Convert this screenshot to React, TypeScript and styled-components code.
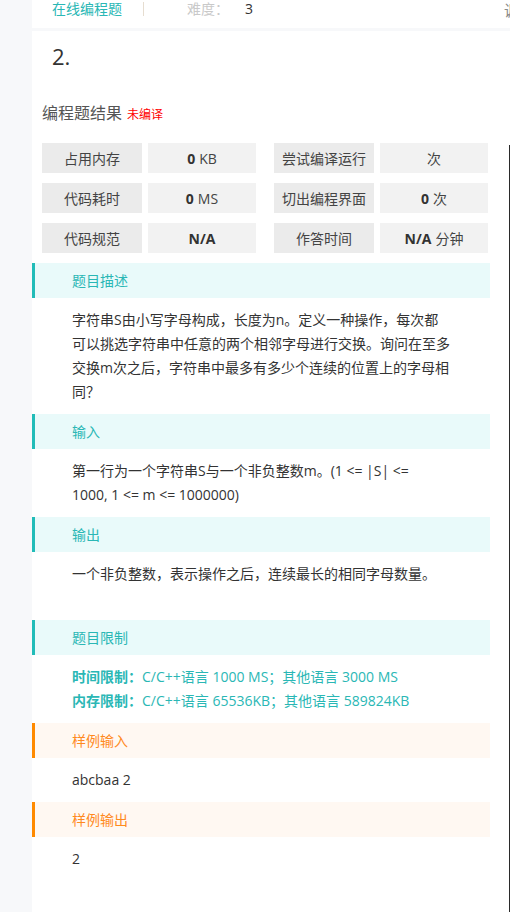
import React from "react";
import styled, { createGlobalStyle } from "styled-components";

const GlobalStyle = createGlobalStyle`
  html, body {
    margin: 0;
    padding: 0;
    background: #f7f8fa;
    overflow: hidden;
  }
  body {
    font-family: "Open Sans", "Noto Sans CJK SC", sans-serif;
    color: #333;
  }
  * { box-sizing: border-box; }
`;

const TEAL = "#2ab7b5";
const TEAL_BORDER = "#21bcb8";
const ORANGE = "#ff8a1e";
const ORANGE_BORDER = "#ff8a00";

const Page = styled.div`
  display: grid;
  grid-template-columns: 32px 1fr;
  min-height: 100vh;
  width: 510px;
  overflow: hidden;
`;

const Sidebar = styled.div`
  background: #f7f8fa;
`;

const Workspace = styled.div`
  display: flex;
  flex-direction: column;
  min-width: 0;
`;

const TopBar = styled.header`
  height: 28px;
  background: #fff;
  display: flex;
  margin-bottom: 3px;
`;

const TopMain = styled.div`
  width: 471px;
  flex: none;
  display: flex;
  align-items: flex-start;
  padding-left: 20px;
  font-size: 14px;
  line-height: 17px;
`;

const TopLink = styled.span`
  color: ${TEAL};
`;

const TopSep = styled.span`
  width: 1px;
  height: 14px;
  margin: 2px 0 0 21px;
  background: #e6ddd0;
`;

const TopLabel = styled.span`
  color: #c9c9c9;
  margin-left: 43px;
`;

const TopValue = styled.span`
  color: #333;
  margin-left: 16px;
`;

const TopSide = styled.div`
  flex: 1;
  overflow: hidden;
  white-space: nowrap;
  font-size: 15px;
  line-height: 20px;
  color: #8a8a8a;
  padding-left: 1px;
`;

const Body = styled.div`
  flex: 1;
  background: #fff;
  display: flex;
`;

const Main = styled.main`
  width: 471px;
  flex: none;
  padding-bottom: 32px;
`;

const Title = styled.h1`
  margin: 10px 0 0 20px;
  font-size: 22px;
  font-weight: 400;
  line-height: 30px;
  color: #333;
`;

const ResultHeading = styled.h2`
  margin: 30px 0 0 10px;
  font-size: 16px;
  font-weight: 400;
  line-height: 24px;
  color: #555;
  display: flex;
  align-items: baseline;
  gap: 5px;
`;

const Status = styled.span`
  font-size: 12px;
  color: #ff0000;
`;

const StatsGrid = styled.div`
  margin: 16px 0 0 10px;
  display: grid;
  grid-template-columns: 214px 214px;
  column-gap: 18px;
  row-gap: 10px;
`;

const StatPair = styled.div`
  display: grid;
  grid-template-columns: 100px 108px;
  column-gap: 6px;
`;

const StatCell = styled.div<{ $label?: boolean }>`
  height: 30px;
  display: flex;
  align-items: center;
  justify-content: center;
  font-size: 14px;
  color: #444;
  background: ${(p) => (p.$label ? "#ebebeb" : "#f2f2f2")};
  gap: 4px;
`;

const Strong = styled.b`
  font-weight: 700;
  color: #333;
`;

const Sections = styled.div`
  margin-top: 10px;
  margin-right: 13px;
`;

const SectionHeader = styled.div<{ $tone: "teal" | "orange" }>`
  height: 35px;
  line-height: 35px;
  padding-left: 37px;
  font-size: 14px;
  border-left: 3px solid ${(p) => (p.$tone === "teal" ? TEAL_BORDER : ORANGE_BORDER)};
  background: ${(p) => (p.$tone === "teal" ? "#e9fafa" : "#fff8f2")};
  color: ${(p) => (p.$tone === "teal" ? TEAL : ORANGE)};
`;

const SectionBody = styled.div<{ $extra?: boolean }>`
  padding: 10px 0 ${(p) => (p.$extra ? "34px" : "10px")} 40px;
`;

const Paragraph = styled.p<{ $accent?: boolean }>`
  margin: 0;
  width: 379px;
  font-size: 14px;
  line-height: 24px;
  color: ${(p) => (p.$accent ? TEAL : "#333")};
`;

const LimitLabel = styled.b`
  font-weight: 700;
`;

const Side = styled.aside`
  flex: 1;
  min-width: 0;
  display: flex;
  flex-direction: column;
  padding-left: 6px;
`;

const SideMark = styled.span`
  margin-top: 72px;
  font-size: 12px;
  line-height: 16px;
  color: #b07a3a;
  padding-left: 1px;
`;

const Editor = styled.div`
  margin-top: 26px;
  flex: 1;
  border-left: 1px solid #2a2a2a;
  background: #fff;
`;

const stats: [string, React.ReactNode, string, React.ReactNode][] = [
  ["占用内存", <><Strong>0</Strong> KB</>, "尝试编译运行", <>次</>],
  ["代码耗时", <><Strong>0</Strong> MS</>, "切出编程界面", <><Strong>0</Strong> 次</>],
  ["代码规范", <Strong>N/A</Strong>, "作答时间", <><Strong>N/A</Strong> 分钟</>],
];

export default function App() {
  return (
    <>
      <GlobalStyle />
      <Page>
        <Sidebar />
        <Workspace>
          <TopBar>
            <TopMain>
              <TopLink>在线编程题</TopLink>
              <TopSep />
              <TopLabel>难度：</TopLabel>
              <TopValue>3</TopValue>
            </TopMain>
            <TopSide>调试</TopSide>
          </TopBar>
          <Body>
            <Main>
              <Title>2.</Title>
              <ResultHeading>
                编程题结果<Status>未编译</Status>
              </ResultHeading>
              <StatsGrid>
                {stats.map(([l1, v1, l2, v2], i) => (
                  <React.Fragment key={i}>
                    <StatPair>
                      <StatCell $label>{l1}</StatCell>
                      <StatCell>{v1}</StatCell>
                    </StatPair>
                    <StatPair>
                      <StatCell $label>{l2}</StatCell>
                      <StatCell>{v2}</StatCell>
                    </StatPair>
                  </React.Fragment>
                ))}
              </StatsGrid>
              <Sections>
                <SectionHeader $tone="teal">题目描述</SectionHeader>
                <SectionBody>
                  <Paragraph>
                    字符串S由小写字母构成，长度为n。定义一种操作，每次都可以挑选字符串中任意的两个相邻字母进行交换。询问在至多交换m次之后，字符串中最多有多少个连续的位置上的字母相同？
                  </Paragraph>
                </SectionBody>
                <SectionHeader $tone="teal">输入</SectionHeader>
                <SectionBody>
                  <Paragraph>
                    第一行为一个字符串S与一个非负整数m。(1 &lt;= |S| &lt;=
                    <br />
                    1000, 1 &lt;= m &lt;= 1000000)
                  </Paragraph>
                </SectionBody>
                <SectionHeader $tone="teal">输出</SectionHeader>
                <SectionBody $extra>
                  <Paragraph>一个非负整数，表示操作之后，连续最长的相同字母数量。</Paragraph>
                </SectionBody>
                <SectionHeader $tone="teal">题目限制</SectionHeader>
                <SectionBody>
                  <Paragraph $accent>
                    <LimitLabel>时间限制：</LimitLabel>C/C++语言 1000 MS；其他语言 3000 MS
                  </Paragraph>
                  <Paragraph $accent>
                    <LimitLabel>内存限制：</LimitLabel>C/C++语言 65536KB；其他语言 589824KB
                  </Paragraph>
                </SectionBody>
                <SectionHeader $tone="orange">样例输入</SectionHeader>
                <SectionBody>
                  <Paragraph>abcbaa 2</Paragraph>
                </SectionBody>
                <SectionHeader $tone="orange">样例输出</SectionHeader>
                <SectionBody>
                  <Paragraph>2</Paragraph>
                </SectionBody>
              </Sections>
            </Main>
            <Side>
              <SideMark>:</SideMark>
              <Editor />
            </Side>
          </Body>
        </Workspace>
      </Page>
    </>
  );
}
